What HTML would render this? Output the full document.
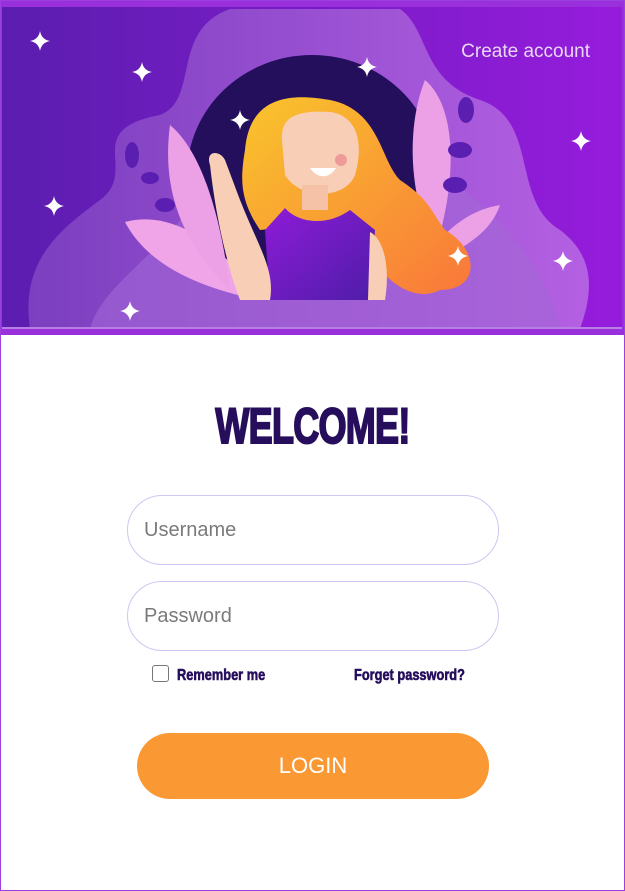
<!DOCTYPE html>
<html><head><meta charset="utf-8"><style>
html,body{margin:0;padding:0;width:625px;height:891px;overflow:hidden;background:#fff}
.frame{position:absolute;left:0;top:0;width:623px;height:889px;border:1px solid #9b3fe0}
.hdr{position:absolute;left:0;top:0;width:625px;height:335px}
.w{position:absolute;left:0;width:625px;top:398px;text-align:center;font-family:"Liberation Sans",sans-serif;font-weight:bold;font-size:50px;color:#260e5c;letter-spacing:-1px;transform:scaleX(0.72);-webkit-text-stroke:2px #260e5c;line-height:56px}
.inp{position:absolute;left:127px;width:372px;height:70px;border:1.5px solid #d2c4f3;border-radius:35px;box-sizing:border-box;font-family:"Liberation Sans",sans-serif;font-size:20px;color:#7a7a7a;padding-left:16px;line-height:68px}
.lbl{position:absolute;top:667px;font-family:"Liberation Sans",sans-serif;font-weight:bold;font-size:16px;color:#260e5c;transform:scaleX(0.8);transform-origin:left;white-space:nowrap;-webkit-text-stroke:0.6px #260e5c}
.cb{position:absolute;left:152px;top:665px;width:17px;height:17px;border:1.5px solid #777;border-radius:3px;box-sizing:border-box}
.btn{position:absolute;left:137px;top:733px;width:352px;height:66px;background:#fa9833;border-radius:33px;color:#fff;font-family:"Liberation Sans",sans-serif;font-size:22px;text-align:center;line-height:66px}
</style></head><body>
<div class="hdr"><svg width="625" height="335" viewBox="0 0 625 335">
<defs>
<linearGradient id="bg" x1="0" x2="1"><stop offset="0" stop-color="#5b1daf"/><stop offset="1" stop-color="#961cdc"/></linearGradient>
<linearGradient id="b2" x1="0" x2="1"><stop offset="0" stop-color="#7b3fbf"/><stop offset="1" stop-color="#b560e3"/></linearGradient>
<linearGradient id="hair" x1="0" y1="0" x2="1" y2="1"><stop offset="0" stop-color="#f9c52c"/><stop offset="1" stop-color="#f9773a"/></linearGradient>
<linearGradient id="dr" x1="0" y1="0" x2="1" y2="1"><stop offset="0" stop-color="#8e1bd8"/><stop offset="1" stop-color="#4e1da8"/></linearGradient>
</defs>
<rect width="625" height="335" fill="#9a30dc"/>
<rect x="2" y="7" width="620" height="322" fill="url(#bg)"/>
<path d="M30 329 C20 260 60 230 100 200 C140 170 80 130 160 115 C200 100 170 30 230 9 L400 9 C430 30 420 80 480 100 C540 120 510 200 560 230 C600 260 590 300 580 329 Z" fill="url(#b2)"/>
<path d="M90 329 C100 290 150 260 180 220 C200 180 180 130 230 110 C290 90 380 110 420 150 C470 200 540 240 560 329 Z" fill="#a467d6" opacity=".6"/>
<ellipse cx="312" cy="175" rx="125" ry="120" fill="#240f5c"/>
<path d="M125 222 C170 210 220 240 260 300 C210 290 150 270 125 222Z" fill="#f0a5e8"/>
<path d="M170 125 C200 150 220 210 230 290 C190 250 160 200 170 125Z" fill="#eca0e6"/>
<path d="M425 80 C460 110 455 190 435 250 C410 200 405 130 425 80Z" fill="#eca0e6"/>
<path d="M500 205 C470 210 440 230 420 270 C460 250 490 235 500 205Z" fill="#eca0e6"/>
<g fill="#5a1fb0"><ellipse cx="132" cy="155" rx="7" ry="13"/><ellipse cx="150" cy="178" rx="9" ry="6"/><ellipse cx="165" cy="205" rx="10" ry="7"/><ellipse cx="466" cy="110" rx="8" ry="13"/><ellipse cx="460" cy="150" rx="12" ry="8"/><ellipse cx="455" cy="185" rx="12" ry="8"/></g>
<path d="M245 150 C250 90 300 95 330 100 C380 110 380 160 400 180 C430 200 430 210 445 230 C480 250 480 290 440 290 C400 310 360 250 350 220 L260 230 C240 200 240 180 245 150Z" fill="url(#hair)"/>
<path d="M282 140 C280 115 300 110 330 112 C355 115 365 140 355 175 C345 200 300 200 285 175Z" fill="#f8cfb6"/>
<rect x="302" y="185" width="26" height="25" fill="#f5c2a8"/>
<path d="M285 208 C300 225 330 225 350 210 L375 230 L370 300 L270 300 L265 230Z" fill="url(#dr)"/>
<path d="M210 165 C205 150 220 150 225 160 L240 200 C260 250 275 270 270 300 L240 300 C225 260 215 210 210 165Z" fill="#f8cfb6"/>
<path d="M370 232 C385 240 390 270 385 300 L368 300Z" fill="#f8cfb6"/>
<path d="M310 168 C318 180 330 178 336 168Z" fill="#fff"/>
<circle cx="341" cy="160" r="6" fill="#ee9a98"/>
<g fill="#fff">
<path id="s" d="M0 -10 Q1.5 -1.5 10 0 Q1.5 1.5 0 10 Q-1.5 1.5 -10 0 Q-1.5 -1.5 0 -10Z" transform="translate(40 41)"/>
<use href="#s" x="102" y="31"/><use href="#s" x="200" y="79"/><use href="#s" x="327" y="26"/>
<use href="#s" x="14" y="165"/><use href="#s" x="90" y="270"/><use href="#s" x="418" y="215"/>
<use href="#s" x="523" y="220"/><use href="#s" x="541" y="100"/>
</g>
<text x="590" y="57" text-anchor="end" font-family="Liberation Sans" font-size="19" fill="#ead7f5">Create account</text>
<rect x="0" y="329" width="625" height="5" fill="#9a30dc"/>
<rect x="2" y="327" width="620" height="2" fill="#b57fe3"/>
</svg></div>
<div class="frame"></div>
<div class="w">WELCOME!</div>
<div class="inp" style="top:495px">Username</div>
<div class="inp" style="top:581px">Password</div>
<div class="cb"></div>
<div class="lbl" style="left:177px">Remember me</div>
<div class="lbl" style="left:354px">Forget password?</div>
<div class="btn">LOGIN</div>
</body></html>
